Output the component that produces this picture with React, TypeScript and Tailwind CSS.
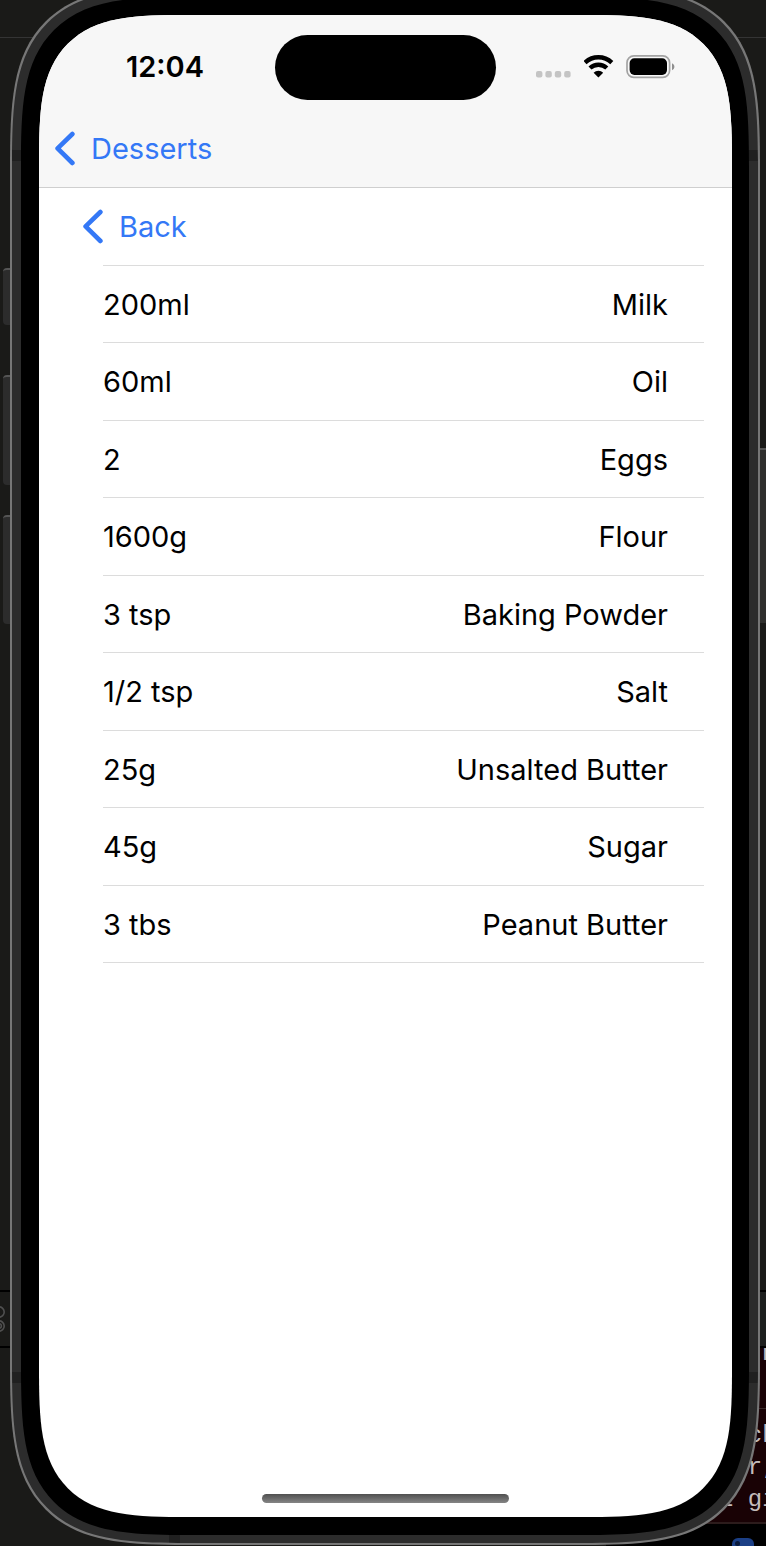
const ingredients = [
  { amount: "200ml", name: "Milk" },
  { amount: "60ml", name: "Oil" },
  { amount: "2", name: "Eggs" },
  { amount: "1600g", name: "Flour" },
  { amount: "3 tsp", name: "Baking Powder" },
  { amount: "1/2 tsp", name: "Salt" },
  { amount: "25g", name: "Unsalted Butter" },
  { amount: "45g", name: "Sugar" },
  { amount: "3 tbs", name: "Peanut Butter" },
];

function Chevron() {
  return (
    <svg className="h-9 w-5 shrink-0" viewBox="0 0 20 36" fill="none" stroke="currentColor" strokeWidth="4.6" strokeLinecap="round" strokeLinejoin="round" aria-hidden="true">
      <path d="M17.4 3 2.6 17.4 17.4 32" />
    </svg>
  );
}

function StatusIcons() {
  return (
    <div className="flex items-center" aria-hidden="true">
      <svg className="h-6 w-[36px]" viewBox="0 0 36 24" fill="#c4c4c4">
        <rect x="0" y="16" width="6.4" height="6.4" rx="2" />
        <rect x="9.4" y="16" width="6.4" height="6.4" rx="2" />
        <rect x="18.8" y="16" width="6.4" height="6.4" rx="2" />
        <rect x="28.2" y="16" width="6.4" height="6.4" rx="2" />
      </svg>
      <svg className="ml-3 h-6 w-[30px]" viewBox="0 0 30 24" fill="none" stroke="black" strokeWidth="4.4">
        <path d="M1 7.6a19.5 19.5 0 0 1 26.8 0" />
        <path d="M6 13a12.3 12.3 0 0 1 16.8 0" />
        <path d="M14.4 22.6 9.6 17.8a6.8 6.8 0 0 1 9.6 0Z" fill="black" stroke="none" />
      </svg>
      <svg className="ml-3 h-6 w-[50px]" viewBox="0 0 50 24" fill="none">
        <rect x="1" y="0.9" width="42.6" height="21.4" rx="6.8" stroke="#a3a3a3" strokeWidth="1.7" />
        <rect x="3.6" y="3.3" width="37.4" height="16.6" rx="4.8" fill="black" />
        <path d="M46 8.2c3.2 1.4 3.2 5.6 0 7Z" fill="#8f8f8f" />
      </svg>
    </div>
  );
}

function Backdrop() {
  return (
    <div className="absolute inset-0 flex flex-col overflow-hidden bg-[#1a1a18]" aria-hidden="true">
      <div className="h-[38px] border-b border-[#343434]" />
      <div className="flex flex-1 items-end justify-between">
        <div className="flex w-[160px] flex-col pb-[198px]">
          <div className="flex h-[58px] items-center border-y-2 border-black">
            <svg className="h-8 w-2" viewBox="0 0 8 32" fill="none" stroke="#505050" strokeWidth="1.6">
              <circle cx="-1" cy="9" r="5.2" />
              <circle cx="-1" cy="23" r="5.2" />
              <circle cx="-1" cy="23" r="2.4" />
            </svg>
          </div>
        </div>
        <div className="flex w-[160px] flex-col bg-[#190205] font-['Liberation_Mono',monospace] text-[24px] leading-8 text-[#c4bcbc]">
          <div className="h-[58px] border-y-2 border-black bg-[#1d1f1e]" />
          <pre className="h-[61px] overflow-hidden border-b border-[#3a2a2a] pl-[156px] font-[inherit] leading-3">n</pre>
          <pre className="h-[115px] overflow-hidden border-b-2 border-[#2c1c1c] pt-[11px] pl-[113px] font-[inherit]">{"  ch\n  r,\nl gi"}</pre>
          <div className="flex h-[22px] items-end justify-end bg-black pr-3">
            <div className="flex h-2 w-[22px] items-end rounded-t-md bg-[#1b3f86] pl-[3px]">
              <div className="size-[5px] rounded-full bg-[#0a1a3c]" />
            </div>
          </div>
        </div>
      </div>
    </div>
  );
}

export default function App() {
  return (
    <div className="relative min-h-screen overflow-hidden">
      <Backdrop />
      <div className="relative -mt-[14px] flex min-h-[calc(100vh+13px)] font-['Inter','Liberation_Sans',sans-serif]">
        <div className="flex w-[10px] flex-col pt-[282px] pl-[3px]">
          <div className="h-[57px] rounded-l border-t-2 border-[#555] bg-[#2c2c2c]" />
          <div className="mt-[50px] h-[110px] rounded-l border-t-2 border-[#555] bg-[#2c2c2c]" />
          <div className="mt-[30px] h-[109px] rounded-l border-t-2 border-[#555] bg-[#2c2c2c]" />
        </div>
        <div className="flex flex-1 flex-col overflow-hidden rounded-[141px] border-2 border-[#777] bg-[#2c2c2c] bg-[linear-gradient(#202020,#202020),linear-gradient(#202020,#202020),linear-gradient(#202020,#202020)] bg-[length:100%_11px,100%_11px,11px_8px] bg-[position:0_162px,0_calc(100%-160px),157px_100%] bg-no-repeat px-[9px] pt-[9px] pb-2 supports-[corner-shape:squircle]:rounded-[185px] supports-[corner-shape:squircle]:[corner-shape:superellipse(1.7)]">
          <div className="flex flex-1 flex-col rounded-[130px] bg-black py-[18px] pr-[17px] pl-[18px] supports-[corner-shape:squircle]:rounded-[172px] supports-[corner-shape:squircle]:[corner-shape:superellipse(1.7)]">
            <main className="flex flex-1 flex-col overflow-hidden rounded-[114px] bg-white supports-[corner-shape:squircle]:rounded-[150px] supports-[corner-shape:squircle]:[corner-shape:superellipse(1.7)]">
              <header className="border-b border-[#cfcfcf] bg-[#f7f7f7]">
                <div className="grid h-[104px] grid-cols-[1fr_221px_1fr] items-center">
                  <time className="pl-4 text-center text-[29px] leading-9 font-semibold">12:04</time>
                  <div className="h-[65px] rounded-full bg-black" />
                  <div className="flex justify-center pr-4">
                    <StatusIcons />
                  </div>
                </div>
                <nav className="flex h-[68px] items-start px-4 pt-3">
                  <button type="button" className="flex items-center gap-4 text-[29px] leading-9 text-[#3478f6]">
                    <Chevron />
                    Desserts
                  </button>
                </nav>
              </header>
              <section className="pr-7 pl-11">
                <button type="button" className="flex h-[77px] items-center gap-4 text-[29px] leading-9 text-[#3478f6]">
                  <Chevron />
                  Back
                </button>
                <div className="pl-5">
                  <table className="w-full border-t border-[#dcdcdc] text-[29px] leading-9" aria-label="Ingredients">
                    <tbody>
                      {ingredients.map((item) => (
                        <tr key={item.name} className="border-b border-[#dcdcdc] odd:h-[77px] even:h-[78px]">
                          <td className="p-0 pt-px">{item.amount}</td>
                          <td className="p-0 pt-px pr-9 text-right">{item.name}</td>
                        </tr>
                      ))}
                    </tbody>
                  </table>
                </div>
              </section>
              <div className="mx-auto mt-auto mb-[14px] h-[9px] w-[247px] rounded-full bg-linear-to-b from-[#505050] to-[#858585]" />
            </main>
          </div>
        </div>
        <div className="flex w-[6px] flex-col pt-[462px]">
          <div className="h-[175px] border-t-2 border-[#555] bg-[#2f2f2d]" />
        </div>
      </div>
    </div>
  );
}
